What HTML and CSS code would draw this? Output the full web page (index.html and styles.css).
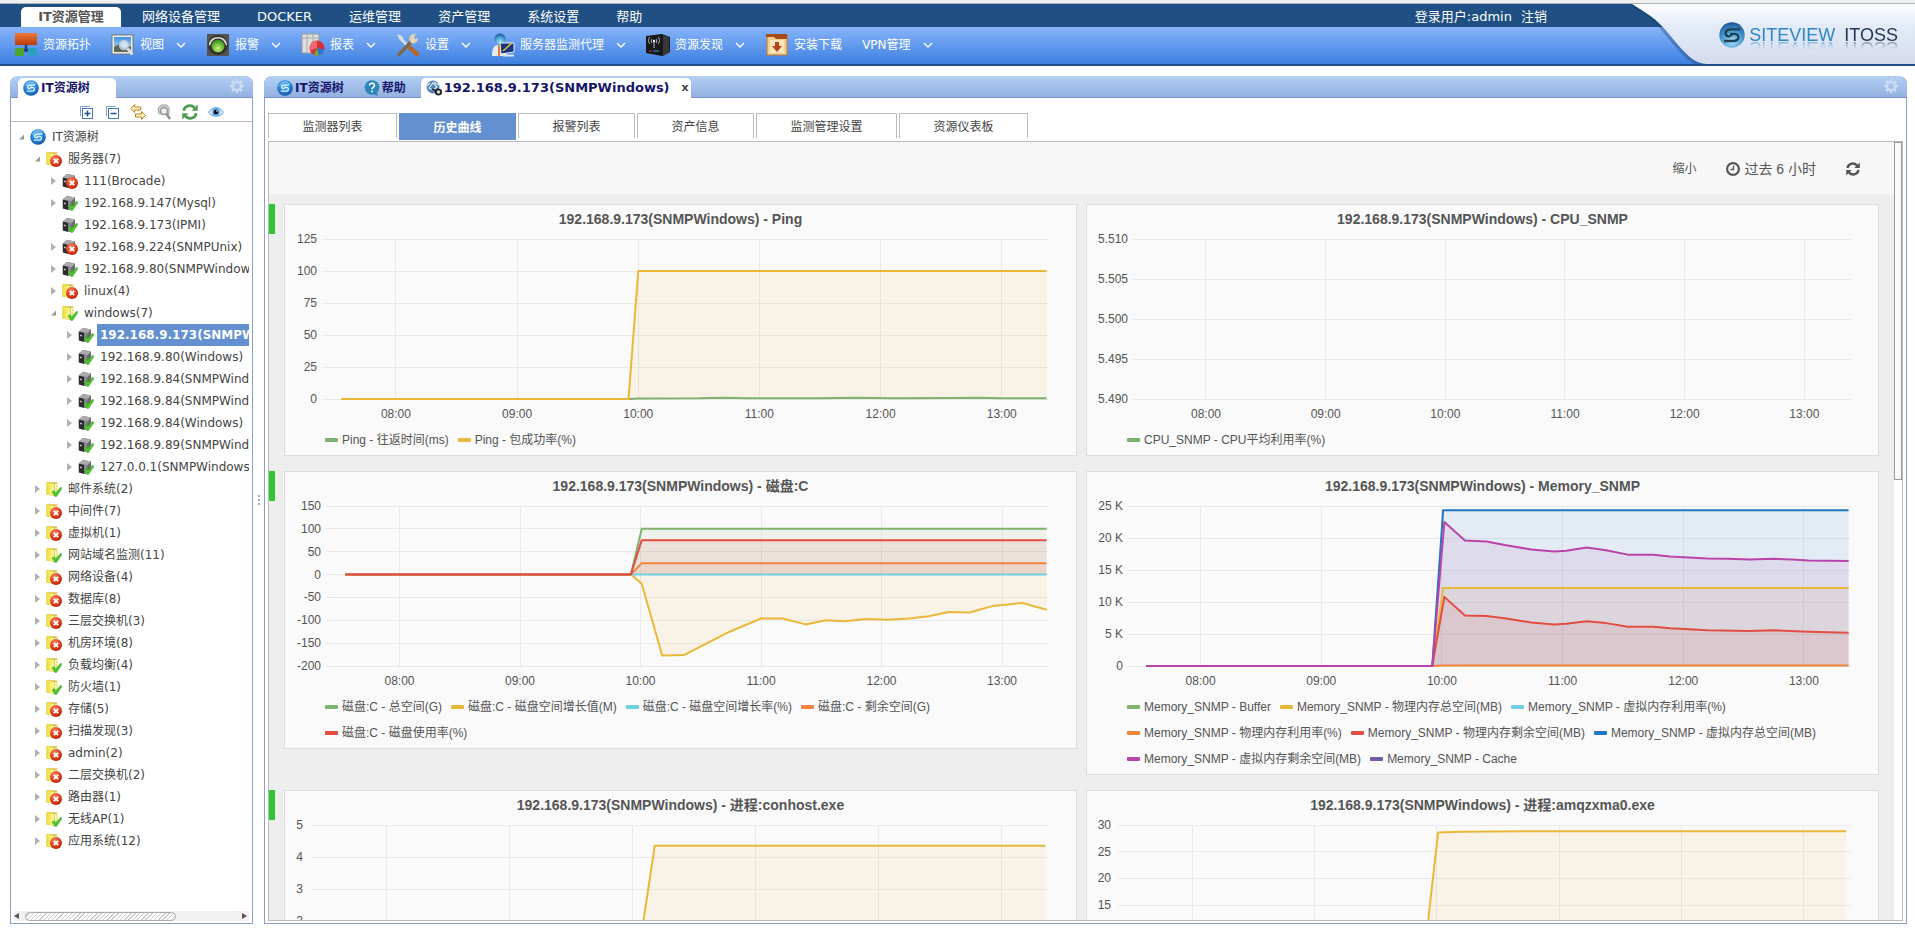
FILE: index.html
```html
<!DOCTYPE html>
<html lang="zh-CN">
<head>
<meta charset="utf-8">
<title>SITEVIEW ITOSS</title>
<link rel="stylesheet" href="styles.css">
</head>
<body>
<svg class="defs" aria-hidden="true">
  <defs>
    <radialGradient id="gBall" cx="45%" cy="35%" r="70%"><stop offset="0" stop-color="#5db4ee"/><stop offset=".6" stop-color="#2480d6"/><stop offset="1" stop-color="#0f4a9c"/></radialGradient>
    <radialGradient id="gGlass" cx="50%" cy="75%" r="75%"><stop offset="0" stop-color="#a9e0fa"/><stop offset=".6" stop-color="#3f94cf"/><stop offset="1" stop-color="#1b5590"/></radialGradient>
    <radialGradient id="gRed" cx="40%" cy="30%" r="75%"><stop offset="0" stop-color="#f58a6a"/><stop offset=".6" stop-color="#e03a1a"/><stop offset="1" stop-color="#b32008"/></radialGradient>
    <linearGradient id="gFold" x1="0" x2="1"><stop offset="0" stop-color="#f0dc3c"/><stop offset="1" stop-color="#fcfa9a"/></linearGradient>
    <linearGradient id="gOrange" x1="0" y1="0" x2="0" y2="1"><stop offset="0" stop-color="#f0783a"/><stop offset="1" stop-color="#b83c0c"/></linearGradient>
    <linearGradient id="gSky" x1="0" y1="0" x2="0" y2="1"><stop offset="0" stop-color="#3f8fe0"/><stop offset="1" stop-color="#d6ebfa"/></linearGradient>
    <radialGradient id="gGreen" cx="50%" cy="70%" r="70%"><stop offset="0" stop-color="#c6f27c"/><stop offset="1" stop-color="#2f8a12"/></radialGradient>
    <linearGradient id="gSwoosh" x1="0" y1="0" x2="0" y2="1"><stop offset="0" stop-color="#ffffff"/><stop offset=".35" stop-color="#e3ecf8"/><stop offset="1" stop-color="#d6dbee"/></linearGradient>
  </defs>
  <symbol id="ess" viewBox="0 0 16 16">
    <path d="M12.200 5H7.600C5.800 5 4.600 5.600 4.600 7s1 1.800 2.400 1.800M3.800 11.200h4.600c1.800 0 3-.6 3-2s-1-1.800-2.400-1.800H7.600v1.400" fill="none" stroke="currentColor" stroke-width="1.300"/>
  </symbol>
  <symbol id="ball" viewBox="0 0 16 16">
    <circle cx="8" cy="8" r="7.800" fill="url(#gBall)"/>
    <path d="M2.500 6A5.800 5.800 0 0 1 12.500 4" fill="none" stroke="#9ad6f8" stroke-width="1"/>
    <use href="#ess" color="#d8f1ff"/>
  </symbol>
  <symbol id="bad" viewBox="0 0 16 16">
    <circle cx="10" cy="10" r="6" fill="url(#gRed)"/>
    <path d="M7.800 7.800l4.400 4.400M12.200 7.800l-4.400 4.400" stroke="#fff" stroke-width="1.900"/>
  </symbol>
  <symbol id="good" viewBox="0 0 16 16">
    <path d="M6 11l2.300-1.500 1.500 2.200L14.800 6l1.200 1.500-5.400 8H9z" fill="#4cc52b" stroke="#2f9a1a" stroke-width=".4"/>
  </symbol>
  <symbol id="folder" viewBox="0 0 16 16">
    <path d="M.5 1.200l10.500.3v11.500l-2 2-8.500-1.500z" fill="#d3b32a"/><path d="M.8 1.600L8.500 3v11.600L.8 13.400z" fill="url(#gFold)"/><path d="M8.500 3L11 1.800v11.400l-2.500 1.800z" fill="#fbf8b4" stroke="#cdb02c" stroke-width=".5"/>
  </symbol>
  <symbol id="server" viewBox="0 0 16 16">
    <path d="M.8 4.500L5 1l8 1.500V11l-4 4-8-2z" fill="#6b6b6d"/><path d="M.8 4.500L6 5.800V15l-5.200-1.500z" fill="#2c2c2e"/><path d="M.8 4.500L5 1l8 1.500-3.500 3.800z" fill="#a9a9ae"/><path d="M6.200 6l3-.2v8.500l-3 .7z" fill="#88888d"/><path d="M2.200 7.500l1.500.4v1.500l-1.500-.4z" fill="#e8e8ea"/>
  </symbol>
  <symbol id="gear" viewBox="0 0 16 16">
    <circle cx="8" cy="8" r="4" fill="none" stroke="currentColor" stroke-width="2.600"/>
    <path d="M8 1v3M8 12v3M1 8h3M12 8h3M3 3l2 2M11 11l2 2M13 3l-2 2M5 11l-2 2" stroke="currentColor" stroke-width="2.600"/>
  </symbol>
  <symbol id="chev" viewBox="0 0 10 6"><path d="M1 1l4 4 4-4" fill="none" stroke="#fff" stroke-width="1.300"/></symbol>
  <symbol id="refresh" viewBox="0 0 14 14">
    <path d="M1.500 6A5.400 5.400 0 0 1 11.200 3.800M12.500 8A5.400 5.400 0 0 1 2.800 10.200" fill="none" stroke="currentColor" stroke-width="2.400"/>
    <path d="M13.800.5v5.500H8.300zM.2 13.500V8h5.500z" fill="currentColor"/>
  </symbol>
</svg>

<header class="top">
  <nav class="menu">
    <a class="menu-item menu-active" href="#">IT资源管理</a>
    <a class="menu-item" href="#">网络设备管理</a>
    <a class="menu-item" href="#">DOCKER</a>
    <a class="menu-item" href="#">运维管理</a>
    <a class="menu-item" href="#">资产管理</a>
    <a class="menu-item" href="#">系统设置</a>
    <a class="menu-item" href="#">帮助</a>
    <div class="user"><span>登录用户:admin</span><a href="#">注销</a></div>
  </nav>
  <div class="tools">
    <button class="tool"><svg class="i24" viewBox="0 0 24 24"><path d="M12 12v7M5 17h14" stroke="#1e3f77" stroke-width="2.500"/><rect x="1" y="0" width="22" height="12" fill="url(#gOrange)"/><rect x="1" y="15" width="9" height="8" rx="1.500" fill="#4da52b"/><rect x="14" y="15" width="9" height="8" rx="1.500" fill="#2a9fc0"/></svg>资源拓扑</button>
    <button class="tool"><svg class="i24" viewBox="0 0 24 24"><rect x="1" y="2" width="21" height="19" fill="#eee" stroke="#777"/><rect x="3" y="4" width="17" height="15" fill="url(#gSky)"/><path d="M3 19v-5l5-3 5 4 7-2v6z" fill="#5b6a55"/><circle cx="13" cy="12" r="4.500" fill="#dceaf8" fill-opacity=".8" stroke="#b8c4d2" stroke-width="1.500"/><path d="M16.500 15.500l5 6" stroke="#dadde2" stroke-width="3"/></svg>视图<svg class="chev"><use href="#chev"/></svg></button>
    <button class="tool"><svg class="i24" viewBox="0 0 24 24"><rect x="1" y="1" width="22" height="22" fill="#55534f"/><circle cx="12" cy="12" r="10" fill="#33322f"/><path d="M3 13C2 1 22 1 21 13l-3-3H6z" fill="#d8d8d4"/><circle cx="12" cy="13" r="7.500" fill="#2b2b28"/><circle cx="12" cy="13" r="6.500" fill="url(#gGreen)"/></svg>报警<svg class="chev"><use href="#chev"/></svg></button>
    <button class="tool"><svg class="i24" viewBox="0 0 24 24"><rect x="1" y="1" width="17" height="19" fill="#dedede" stroke="#999"/><path d="M1 5h17M6 1v19M12 1v19" stroke="#aaa"/><circle cx="16" cy="15" r="7.500" fill="#d62f3c"/><path d="M16 15V7.500a7.500 7.500 0 0 0-7 10z" fill="#ee6a70"/><path d="M16 15l-3 7a7.500 7.500 0 0 0 5 .2z" fill="#65b32e"/><path d="M16 15l2 7.200a7.500 7.500 0 0 0 5.300-5.700z" fill="#2f77cc"/></svg>报表<svg class="chev"><use href="#chev"/></svg></button>
    <button class="tool"><svg class="i24" viewBox="0 0 24 24"><path d="M1 1l5 2 2 4 6 6-2 2-6-6-3-3z" fill="#d9dde2"/><path d="M14 15l7 6" stroke="#b5682c" stroke-width="4.500" stroke-linecap="round"/><path d="M3 21.500L16 8" stroke="#7d6a4c" stroke-width="3.500" stroke-linecap="round"/><path d="M14 8a5 5 0 0 1 6-7l-2 3 1 2 3-1a5 5 0 0 1-7 5z" fill="#e7d3b0"/></svg>设置<svg class="chev"><use href="#chev"/></svg></button>
    <button class="tool"><svg class="i24" viewBox="0 0 24 24"><path d="M1 23c0-8 2-11 7-11s7 3 8 11z" fill="#e6ebf0"/><circle cx="9" cy="6" r="5.500" fill="url(#gGlass)"/><path d="M8 12v11" stroke="#dc7e2a" stroke-width="2"/><path d="M9 10h14v9l-13 2z" fill="#17347f" stroke="#e8eef8"/><path d="M12 18l9-8" stroke="#f0b93c" stroke-width="1.500"/><path d="M12 22.500h11" stroke="#dfe4ea" stroke-width="2"/></svg>服务器监测代理<svg class="chev"><use href="#chev"/></svg></button>
    <button class="tool"><svg class="i24" viewBox="0 0 24 24"><path d="M0 3l16-2 8 3v15l-8 4-16-3z" fill="#18181b"/><path d="M17 2l6 2v16l-6 3z" fill="#37373c"/><path d="M8 9v6M6 6c-1 1-1 3 0 4M10 6c1 1 1 3 0 4M4 4c-2 2-2 5 0 7M12 4c2 2 2 5 0 7" stroke="#bcbcc2" fill="none" stroke-width="1"/><circle cx="8" cy="8" r="1.200" fill="#fff"/><path d="M3 18h3" stroke="#c33"/><path d="M7 18h6" stroke="#39c"/></svg>资源发现<svg class="chev"><use href="#chev"/></svg></button>
    <button class="tool"><svg class="i24" viewBox="0 0 24 24"><rect x="2" y="2" width="20" height="20" fill="#f3cf8d" stroke="#c47b33"/><path d="M1 1h21v5H11L9 4H1z" fill="#a64a1c"/><path d="M5 7h14v13H5z" fill="#fae6bb"/><path d="M12 9v5" stroke="#b5441c" stroke-width="4"/><path d="M7 13h10l-5 6z" fill="#b5441c"/></svg>安装下载</button>
    <button class="tool">VPN管理<svg class="chev"><use href="#chev"/></svg></button>
  </div>
  <div class="brand">
    <svg class="brand-bg" viewBox="0 0 283 60" preserveAspectRatio="none"><path d="M0 0C14 9 22 12 34 28C54 52 60 60 76 60" fill="none" stroke="#12396c" stroke-opacity=".35" stroke-width="5"/><path d="M0 0C14 9 24 14 36 29C56 53 62 60 78 60H283V0z" fill="url(#gSwoosh)"/></svg>
    <div class="brand-name"><svg class="i26" viewBox="0 0 16 16"><circle cx="8" cy="8" r="7.800" fill="url(#gGlass)"/><use href="#ess" color="#1d4256" transform="translate(-1.200 -1.200) scale(1.150)"/></svg><span class="brand-a">SITEVIEW</span><span class="brand-b">ITOSS</span></div>
  </div>
</header>

<main class="work">
  <aside class="panel side">
    <div class="bar">
      <button class="tab tab-on side-tab"><svg class="i16"><use href="#ball"/></svg>IT资源树</button>
      <svg class="i16 gear"><use href="#gear"/></svg>
    </div>
    <div class="side-tools">
      <button aria-label="展开"><svg class="i16" viewBox="0 0 16 16"><path d="M2.500 12V2.500H12" fill="none" stroke="#7fa3cc"/><rect x="4.500" y="4.500" width="10" height="10" fill="#fff" stroke="#3f79b8"/><path d="M9.500 6.500v6M6.500 9.500h6" stroke="#1c4f94" stroke-width="1.500"/></svg></button>
      <button aria-label="收起"><svg class="i16" viewBox="0 0 16 16"><path d="M2.500 12V2.500H12" fill="none" stroke="#7fa3cc"/><rect x="4.500" y="4.500" width="10" height="10" fill="#fff" stroke="#3f79b8"/><path d="M6.500 9.500h6" stroke="#1c4f94" stroke-width="1.500"/></svg></button>
      <button aria-label="同步"><svg class="i16" viewBox="0 0 16 16"><path d="M.7 4.500l4-4V3h6v3h-6v2.500zM15.500 11.500l-4-4V10h-6v3h6v2.500z" fill="#fff3c4" stroke="#b98420"/></svg></button>
      <button aria-label="查找"><svg class="i16" viewBox="0 0 16 16"><path d="M2 4l3-3h6l2 3v6H3z" fill="#cfcfcf" stroke="#a5a5a5"/><circle cx="8" cy="7" r="3.500" fill="#eee" stroke="#999" stroke-width="1.500"/><path d="M10.500 10l3.500 5" stroke="#909090" stroke-width="2.500"/></svg></button>
      <button aria-label="刷新"><svg class="i16 green"><use href="#refresh"/></svg></button>
      <button aria-label="显示"><svg class="i16" viewBox="0 0 16 16"><path d="M.5 8.500C4 2 12 2 15.500 8.500 12 13.500 4 13.500.5 8.500z" fill="#cfe6f8" stroke="#63a5dc"/><circle cx="8" cy="8" r="3.800" fill="#4d9ada"/><circle cx="8" cy="8" r="2.200" fill="#111"/><circle cx="9" cy="7" r=".8" fill="#fff"/></svg></button>
    </div>
    <ul class="tree" id="tree"></ul>
    <div class="hscroll"><i class="arr arr-l"></i><i class="hthumb"></i><i class="arr arr-r"></i></div>
  </aside>
  <div class="split"><i></i><i></i><i></i></div>
  <section class="panel main">
    <div class="bar">
      <button class="tab"><svg class="i16"><use href="#ball"/></svg>IT资源树</button>
      <button class="tab"><svg class="i16" viewBox="0 0 16 16"><circle cx="8" cy="7.500" r="7.300" fill="#2c86b8"/><path d="M9 14l5 2-1-4z" fill="#2c86b8"/><path d="M5.500 5.500c0-3 5-3 5-.3C10.500 7.500 8 7 8 9.300M8 10.500v1.800" fill="none" stroke="#fff" stroke-width="1.600"/></svg>帮助</button>
      <button class="tab tab-on tab-host"><svg class="i16" viewBox="0 0 16 16"><circle cx="7" cy="7" r="6.500" fill="#4f86b8"/><path d="M3 8l4-5 4 4-4 3zM1 6l3-3M8 2l5 3" stroke="#d6e8f6" stroke-width="1.200" fill="none"/><circle cx="12.500" cy="12" r="2.700" fill="#cfd8e0" stroke="#222" stroke-width="1.800"/><path d="M6 9l4 2" stroke="#222" stroke-width="1.500"/></svg>192.168.9.173(SNMPWindows)<span class="close">x</span></button>
      <svg class="i16 gear"><use href="#gear"/></svg>
    </div>
    <div class="body">
      <div class="subtabs">
        <button class="sub wide">监测器列表</button>
        <button class="sub sub-on">历史曲线</button>
        <button class="sub">报警列表</button>
        <button class="sub">资产信息</button>
        <button class="sub wider">监测管理设置</button>
        <button class="sub wide">资源仪表板</button>
      </div>
      <div class="frame">
        <div class="view">
          <div class="time">
            <button>缩小</button>
            <button class="range"><svg class="i14" viewBox="0 0 14 14"><circle cx="7" cy="7" r="5.900" fill="none" stroke="#555" stroke-width="2.200"/><path d="M7.500 3.500V7.500H4.500" fill="none" stroke="#555" stroke-width="1.300"/></svg>过去 6 小时</button>
            <button aria-label="刷新"><svg class="i14"><use href="#refresh"/></svg></button>
          </div>
          <div class="rows" id="rows"></div>
        </div>
        <div class="vscroll"><i class="vthumb"></i></div>
      </div>
    </div>
  </section>
</main>
<script src="app.js"></script>
</body>
</html>
```

FILE: styles.css
```css
* { box-sizing: border-box; }
body { margin: 0; height: 100vh; display: flex; flex-direction: column; background: #fff; color: #444; font: 12px/16px "DejaVu Sans", "Noto Sans CJK SC", sans-serif; overflow: hidden; }
button { border: 0; padding: 0; margin: 0; background: none; color: inherit; font: inherit; cursor: pointer; display: flex; align-items: center; white-space: nowrap; }
a { color: inherit; text-decoration: none; }
svg { display: block; flex: none; }
.defs { position: absolute; width: 0; height: 0; }
.i14 { width: 14px; height: 14px; }
.i16 { width: 16px; height: 16px; }
.i24 { width: 24px; height: 24px; margin-right: 5px; }
.i26 { width: 26px; height: 26px; }

.top { position: relative; flex: none; height: 66px; border-top: 3px solid #f0f0f0; border-bottom: 2px solid #1f4e8a; color: #fff; }
.menu { height: 24px; border-top: 1px solid #aab4c0; background: #205083; display: flex; align-items: center; gap: 37px; padding: 2px 0 0 21px; font-size: 13px; line-height: 20px; }
.menu-active { align-self: flex-end; width: 100px; margin-right: -16px; background: #fff; color: #555; font-weight: bold; text-align: center; border-radius: 5px 5px 0 0; height: 20px; }
.user { display: flex; gap: 9px; margin-left: auto; margin-right: 368px; }
.tools { height: 37px; display: flex; align-items: flex-start; gap: 20px; padding: 5px 0 0 14px; background: linear-gradient(#86b4fa, #3e80e0); }
.tool { height: 25px; font-size: 12px; }
.chev { width: 10px; height: 6px; margin-left: 12px; }
.brand { position: absolute; right: 0; top: 1px; bottom: 0; width: 283px; }
.brand-bg { width: 100%; height: 100%; }
.brand-name { position: absolute; right: 17px; top: 18px; display: flex; align-items: center; font: 18px/22px "Liberation Sans", Arial, sans-serif; }
.brand-a, .brand-b { -webkit-box-reflect: below -9px linear-gradient(transparent 45%, rgba(0, 0, 0, .5) 80%); }
.brand-a { margin: 0 9px 0 4px; color: #2f86c8; }
.brand-b { color: #1f3350; }

.work { flex: 1; min-height: 0; display: flex; padding: 10px 8px 6px 10px; }
.panel { display: flex; flex-direction: column; min-width: 0; border: 1px solid #8aa0c8; border-top: 0; border-radius: 8px 8px 0 0; }
.side { width: 243px; flex: none; }
.main { flex: 1; }
.bar { flex: none; height: 22px; margin: 0 -1px; display: flex; align-items: flex-end; padding: 0 8px; background: linear-gradient(#b3cff5, #93b0e0); border-bottom: 1px solid #7c96c6; border-radius: 8px 8px 0 0; }
.tab { height: 19px; padding: 0 5px; gap: 2px; color: #15156a; font-weight: bold; font-size: 12px; }
.tab + .tab { margin-left: 10px; }
.tab-on { background: #fff; height: 20px; margin-bottom: -1px; border-radius: 5px 5px 0 0; }
.side-tab { width: 98px; }
.tab-host { font-size: 13px; padding-right: 2px; }
.close { color: #444; font-size: 11px; margin-left: 10px; }
.gear { margin: 0 0 3px auto; color: #c9dbf3; }

.side-tools { flex: none; height: 24px; display: flex; align-items: center; gap: 10px; padding: 5px 0 0 67px; border-bottom: 1px solid #bbb; }
.green { color: #4f9a55; }
.tree { flex: 1; min-height: 0; overflow: hidden; list-style: none; margin: 4px 3px 0 4px; padding: 0; }
.node { display: flex; align-items: center; height: 22px; white-space: nowrap; }
.node-1 { padding-left: 16px; }
.node-2 { padding-left: 32px; }
.node-3 { padding-left: 48px; }
.twist { flex: none; width: 5px; height: 8px; margin: 0 6px 0 4px; }
.name { flex: 1; min-width: 0; overflow: hidden; padding-left: 3px; margin-left: 3px; line-height: 22px; }
.picked { background: #6390d0; color: #fff; font-weight: bold; }
.hscroll { flex: none; height: 10px; margin: 0 3px 2px; background: #f1f1f1; display: flex; align-items: center; }
.hthumb { width: 151px; height: 9px; margin: 0 auto 0 6px; border: 1px solid #aaa; border-radius: 5px; background: repeating-linear-gradient(135deg, #fff 0 2px, #ccc 2px 3px); }
.arr { border: 3px solid transparent; }
.arr-l { border-right: 5px solid #555; border-left: 0; }
.arr-r { border-left: 5px solid #555; border-right: 0; margin-right: 2px; }
.split { flex: none; width: 11px; display: flex; flex-direction: column; align-items: center; justify-content: center; gap: 2px; }
.split i { width: 2px; height: 2px; background: #aaa; }

.body { flex: 1; min-height: 0; display: flex; flex-direction: column; padding: 15px 3px 2px; }
.subtabs { flex: none; display: flex; gap: 2px; height: 28px; align-items: flex-start; }
.sub { justify-content: center; width: 117px; height: 25px; padding-top: 1px; border: 1px solid #bbb; border-bottom: 0; }
.wide { width: 129px; }
.wider { width: 141px; }
.sub-on { height: 27px; background: #6390d0; border-color: #6390d0; color: #fff; font-weight: bold; }
.frame { flex: 1; min-height: 0; display: flex; border: 1px solid #bbb; }
.view { flex: 1; min-width: 0; overflow: hidden; background: #eee; font-family: "Liberation Sans", Arial, "Noto Sans CJK SC", sans-serif; }
.time { height: 52px; display: flex; align-items: center; justify-content: flex-end; gap: 30px; padding: 1px 34px 0 0; background: #f7f7f7; color: #555; }
.range { font-size: 14px; gap: 4px; }
.vscroll { flex: none; width: 8px; background: #fff; }
.vthumb { display: block; height: 338px; border: 1px solid #999; background: #fafafa; }
.rows { padding-top: 10px; }
.row { display: grid; grid-template-columns: 6px 1fr 1fr; column-gap: 9px; padding-right: 15px; margin-bottom: 15px; align-items: start; }
.mark { height: 30px; background: #33c433; }
.card { min-width: 0; border: 1px solid #ddd; background: #fafafa; padding-bottom: 2px; }
.card-title { margin: 0; font-size: 14px; line-height: 28px; text-align: center; color: #555; }
.plot { display: block; width: 100%; height: 194px; font-size: 12px; fill: #545454; }
.grid { stroke: #e9e9e9; shape-rendering: crispEdges; }
.end { text-anchor: end; }
.mid { text-anchor: middle; }
.legend { list-style: none; margin: 0; padding: 0 36px 0 40px; display: flex; flex-wrap: wrap; column-gap: 9px; color: #545454; }
.legend li { display: flex; align-items: center; gap: 4px; height: 26px; white-space: nowrap; }
.legend i { width: 13px; height: 4px; border-radius: 1px; }
```

FILE: app.js
```js
const GREEN = '#7eb26d', YELLOW = '#eab839', CYAN = '#6ed0e0', ORANGE = '#ef843c';
const RED = '#e24d42', BLUE = '#1f78c1', PURPLE = '#ba43a9', VIOLET = '#705da0';

/* Tree: depth, twisty (o open, c closed, - none), icon, state, label */
const nodes = [
  [0, 'o', 'ball', '', 'IT资源树'], [1, 'o', 'folder', 'bad', '服务器(7)'],
  [2, 'c', 'server', 'bad', '111(Brocade)'], [2, 'c', 'server', 'good', '192.168.9.147(Mysql)'],
  [2, '-', 'server', 'good', '192.168.9.173(IPMI)'], [2, 'c', 'server', 'bad', '192.168.9.224(SNMPUnix)'],
  [2, 'c', 'server', 'good', '192.168.9.80(SNMPWindows)'], [2, 'c', 'folder', 'bad', 'linux(4)'],
  [2, 'o', 'folder', 'good', 'windows(7)'], [3, 'c', 'server', 'good', '192.168.9.173(SNMPWindows)', true],
  [3, 'c', 'server', 'good', '192.168.9.80(Windows)'], [3, 'c', 'server', 'good', '192.168.9.84(SNMPWindows)'],
  [3, 'c', 'server', 'good', '192.168.9.84(SNMPWindows)'], [3, 'c', 'server', 'good', '192.168.9.84(Windows)'],
  [3, 'c', 'server', 'good', '192.168.9.89(SNMPWindows)'], [3, 'c', 'server', 'good', '127.0.0.1(SNMPWindows)'],
  [1, 'c', 'folder', 'good', '邮件系统(2)'], [1, 'c', 'folder', 'bad', '中间件(7)'],
  [1, 'c', 'folder', 'bad', '虚拟机(1)'], [1, 'c', 'folder', 'good', '网站域名监测(11)'],
  [1, 'c', 'folder', 'bad', '网络设备(4)'], [1, 'c', 'folder', 'bad', '数据库(8)'],
  [1, 'c', 'folder', 'bad', '三层交换机(3)'], [1, 'c', 'folder', 'bad', '机房环境(8)'],
  [1, 'c', 'folder', 'good', '负载均衡(4)'], [1, 'c', 'folder', 'good', '防火墙(1)'],
  [1, 'c', 'folder', 'bad', '存储(5)'], [1, 'c', 'folder', 'bad', '扫描发现(3)'],
  [1, 'c', 'folder', 'bad', 'admin(2)'], [1, 'c', 'folder', 'bad', '二层交换机(2)'],
  [1, 'c', 'folder', 'bad', '路由器(1)'], [1, 'c', 'folder', 'good', '无线AP(1)'],
  [1, 'c', 'folder', 'bad', '应用系统(12)']
];
const twist = { o: '<path d="M5 1.500v5H0z" fill="#999"/>', c: '<path d="M0 0l5 4-5 4z" fill="#b0b0b0"/>', '-': '' };
document.getElementById('tree').innerHTML = nodes.map(([d, t, icon, state, label, on]) =>
  `<li class="node node-${d}"><svg class="twist" viewBox="0 0 5 8">${twist[t]}</svg>` +
  `<svg class="i16"><use href="#${icon}"/>${state ? `<use href="#${state}"/>` : ''}</svg>` +
  `<span class="name${on ? ' picked' : ''}">${label}</span></li>`).join('');

/* Charts: times are hours of the day */
const T0 = 7.39, T1 = 13.39, START = 7.55, UP = 9.92, END = 13.37;
const step = (v, t = 10.01) => [[START, 0], [UP, 0], [t, v], [END, v]];
const after = pts => [[START, 0], [UP, 0], ...pts];
const H = '192.168.9.173(SNMPWindows) - ';
const M = 'Memory_SNMP - ', C = '磁盘:C - ';

const charts = [
  { title: 'Ping', left: 37, gap: 5, min: 0, max: 125, ticks: [0, 25, 50, 75, 100, 125], series: [
    [GREEN, after([[10, .4], [10.5, .5], [10.7, 1], [10.9, .5], [11.5, .5], [11.8, 1], [12.1, .5], [12.6, .8], [12.8, 1], [13, .5], [END, .5]])],
    [YELLOW, step(100, 10)]],
    legend: [[GREEN, 'Ping - 往返时间(ms)'], [YELLOW, 'Ping - 包成功率(%)']] },
  { title: 'CPU_SNMP', left: 46, gap: 5, min: 5.49, max: 5.51, ticks: [5.49, 5.495, 5.5, 5.505, 5.51], fmt: v => v.toFixed(3), series: [],
    legend: [[GREEN, 'CPU_SNMP - CPU平均利用率(%)']] },
  { title: '磁盘:C', left: 41, gap: 5, min: -200, max: 150, ticks: [-200, -150, -100, -50, 0, 50, 100, 150], series: [
    [GREEN, step(100)],
    [YELLOW, after([[10.01, -20], [10.18, -177], [10.36, -176], [10.74, -125], [11, -96], [11.18, -96], [11.37, -109], [11.54, -100], [11.69, -102], [11.87, -97], [12.05, -99], [12.23, -96], [12.39, -91], [12.56, -82], [12.73, -83], [12.92, -69], [13.17, -62], [END, -77]])],
    [CYAN, step(0)], [ORANGE, step(25)], [RED, step(75)]],
    legend: [[GREEN, C + '总空间(G)'], [YELLOW, C + '磁盘空间增长值(M)'], [CYAN, C + '磁盘空间增长率(%)'], [ORANGE, C + '剩余空间(G)'], [RED, C + '磁盘使用率(%)']] },
  { title: 'Memory_SNMP', left: 40, gap: 4, min: 0, max: 25, ticks: [0, 5, 10, 15, 20, 25], fmt: v => v ? v + ' K' : '0', series: [
    [YELLOW, step(12.2)], [ORANGE, step(.06)],
    [RED, after([[10.02, 10.8], [10.19, 7.9], [10.37, 7.8], [10.52, 7.45], [10.74, 6.8], [10.93, 6.5], [11.03, 6.6], [11.2, 7], [11.36, 6.7], [11.54, 6.15], [11.75, 6.15], [11.89, 5.9], [12.2, 5.6], [12.55, 5.45], [12.75, 5.57], [13.04, 5.36], [END, 5.2]])],
    [BLUE, step(24.35)],
    [PURPLE, after([[10.02, 22.5], [10.19, 19.6], [10.37, 19.45], [10.52, 18.9], [10.74, 18.2], [10.93, 17.9], [11.03, 18], [11.2, 18.5], [11.36, 18.1], [11.54, 17.4], [11.75, 17.4], [11.89, 17.1], [12.2, 16.8], [12.37, 16.75], [12.55, 16.65], [12.75, 16.75], [12.9, 16.65], [13.04, 16.5], [END, 16.4]])]],
    legend: [[GREEN, M + 'Buffer'], [YELLOW, M + '物理内存总空间(MB)'], [CYAN, M + '虚拟内存利用率(%)'], [ORANGE, M + '物理内存利用率(%)'], [RED, M + '物理内存剩余空间(MB)'], [BLUE, M + '虚拟内存总空间(MB)'], [PURPLE, M + '虚拟内存剩余空间(MB)'], [VIOLET, M + 'Cache']] },
  { title: '进程:conhost.exe', left: 27, gap: 9, min: 0, max: 5, ticks: [0, 1, 2, 3, 4, 5], series: [[YELLOW, [[START, 0], [10.01, 0], [10.18, 4.35], [13.36, 4.35]]]], legend: [] },
  { title: '进程:amqzxma0.exe', left: 31, gap: 7, min: 0, max: 30, ticks: [0, 5, 10, 15, 20, 25, 30], series: [[YELLOW, [[START, 0], [9.87, 0], [10.01, 28.6], [10.19, 28.75], [10.8, 28.85], [13.35, 28.85]]]], legend: [] }
];

const rows = document.getElementById('rows');
for (let r = 0; r < charts.length; r += 2) {
  rows.insertAdjacentHTML('beforeend', '<div class="row"><i class="mark"></i>' + charts.slice(r, r + 2).map(c =>
    `<article class="card"><h2 class="card-title">${H}${c.title}</h2><svg class="plot"></svg><ul class="legend">` +
    c.legend.map(([col, t]) => `<li><i style="background:${col}"></i>${t}</li>`).join('') + '</ul></article>').join('') + '</div>');
}

function draw() {
  document.querySelectorAll('.plot').forEach((svg, n) => {
    const c = charts[n], top = 6, bottom = 166, right = svg.clientWidth - 27;
    const x = t => c.left + (t - T0) / (T1 - T0) * (right - c.left);
    const y = v => bottom - (v - c.min) / (c.max - c.min) * (bottom - top);
    let s = '';
    for (const v of c.ticks) {
      s += `<path class="grid" d="M${c.left} ${y(v)}H${right}"/><text class="end" x="${c.left - c.gap}" y="${y(v) + 4}">${c.fmt ? c.fmt(v) : v}</text>`;
    }
    for (let h = 8; h <= 13; h++) {
      s += `<path class="grid" d="M${x(h)} ${top}V${bottom}"/><text class="mid" x="${x(h)}" y="${bottom + 19}">${String(h).padStart(2, '0')}:00</text>`;
    }
    for (const [col, pts] of c.series) {
      const d = pts.map(([t, v]) => `${x(t)} ${y(v)}`).join('L');
      s += `<path d="M${d}L${x(pts[pts.length - 1][0])} ${y(0)}H${x(START)}z" fill="${col}" fill-opacity=".1"/>`;
    }
    for (const [col, pts] of c.series) {
      s += `<path d="M${pts.map(([t, v]) => `${x(t)} ${y(v)}`).join('L')}" fill="none" stroke="${col}" stroke-width="2" stroke-linejoin="round"/>`;
    }
    svg.innerHTML = s;
  });
}
draw();
addEventListener('resize', draw);
```
